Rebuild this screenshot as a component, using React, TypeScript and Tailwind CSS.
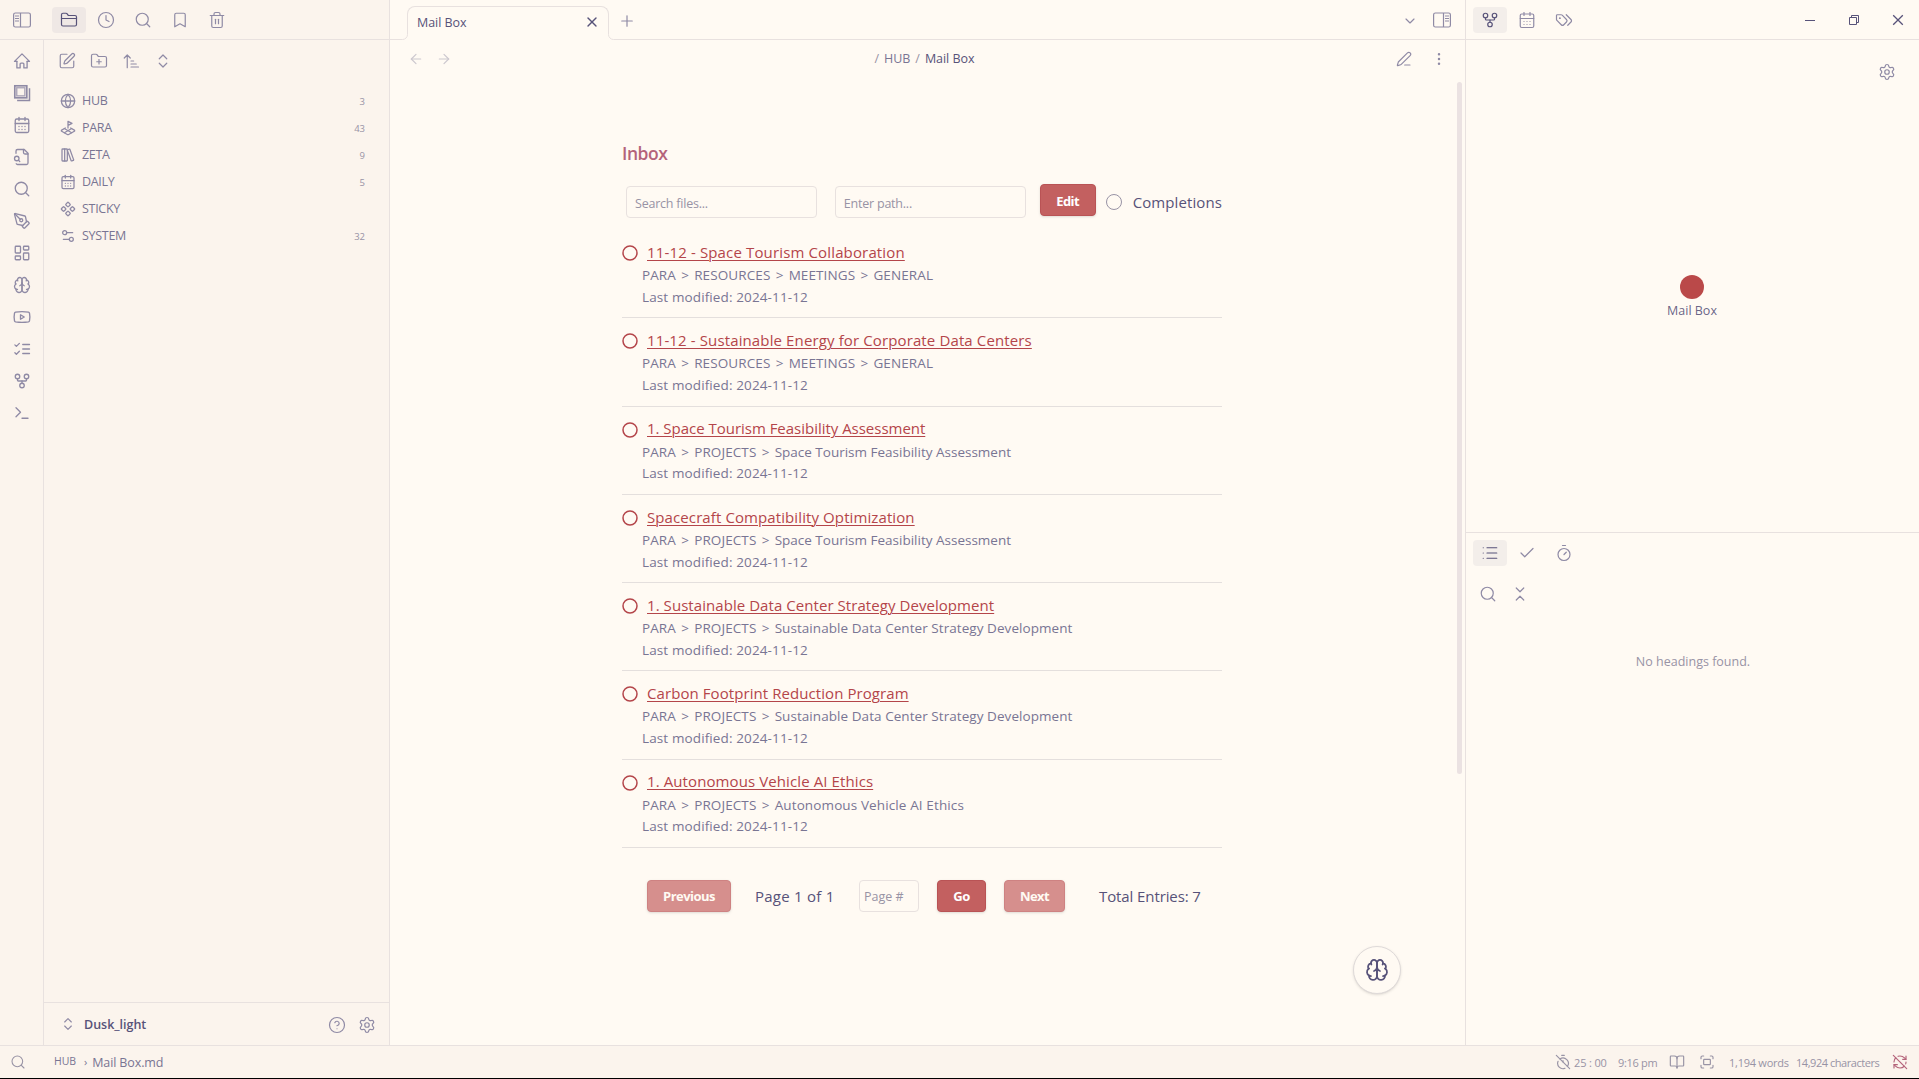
import React from "react";
import {
  ArrowLeft,
  ArrowRight,
  Bookmark,
  BookOpen,
  CalendarDays,
  Check,
  ChevronDown,
  ChevronsDownUp,
  ChevronsUpDown,
  CircleHelp,
  Clock,
  Component,
  EllipsisVertical,
  FolderClosed,
  FolderPlus,
  GitFork,
  Globe,
  LandPlot,
  LayoutDashboard,
  LibraryBig,
  List,
  PenTool,
  Plus,
  RefreshCwOff,
  Search,
  Settings,
  Settings2,
  SquarePen,
  Terminal,
  Timer,
  TimerOff,
  Trash2,
  X,
} from "lucide-react";

type IconProps = { size?: number; strokeWidth?: number; className?: string };
type IconType = React.ComponentType<any>;

function icon(children: React.ReactNode) {
  return function Icon({ size = 18, strokeWidth = 1.75, className = "" }: IconProps) {
    return (
      <svg
        width={size}
        height={size}
        viewBox="0 0 24 24"
        fill="none"
        stroke="currentColor"
        strokeWidth={strokeWidth}
        strokeLinecap="round"
        strokeLinejoin="round"
        className={className}
      >
        {children}
      </svg>
    );
  };
}

const HomeIcon = icon(
  <>
    <path d="M5.2 12.5H2L12 2.5l10 10h-3.200" />
    <path d="M5.2 12.500v8.700h4.300V16a1.200 1.200 0 0 1 1.200-1.200h2.600A1.200 1.200 0 0 1 14.500 16v5.200h4.300v-8.700" />
  </>,
);
const FramesIcon = icon(
  <>
    <rect x="2.4" y="2.4" width="16" height="16" strokeWidth="2.2" strokeLinejoin="miter" />
    <rect x="5" y="5" width="10.8" height="10.8" strokeWidth="1.8" strokeLinejoin="miter" opacity="0.75" />
    <path d="M22 5.5V22H5.500" strokeWidth="2" strokeLinecap="butt" strokeLinejoin="miter" />
  </>,
);
const FileSearchIcon = icon(
  <>
    <path d="M14 2v4a2 2 0 0 0 2 2h4" />
    <path d="M4.268 21a2 2 0 0 0 1.727 1H18a2 2 0 0 0 2-2V7l-5-5H6a2 2 0 0 0-2 2v3" />
    <path d="m9 18-1.5-1.5" />
    <circle cx="5" cy="14" r="3" />
  </>,
);
const BrainIcon = icon(
  <>
    <path d="M12 5a3 3 0 1 0-5.997.125 4 4 0 0 0-2.526 5.77 4 4 0 0 0 .556 6.588A4 4 0 1 0 12 18Z" />
    <path d="M12 5a3 3 0 1 1 5.997.125 4 4 0 0 1 2.526 5.77 4 4 0 0 1-.556 6.588A4 4 0 1 1 12 18Z" />
    <path d="M15 13a4.5 4.5 0 0 1-3-4 4.5 4.5 0 0 1-3 4" />
    <path d="M17.599 6.5a3 3 0 0 0 .399-1.375" />
    <path d="M6.003 5.125A3 3 0 0 0 6.401 6.5" />
    <path d="M3.477 10.896a4 4 0 0 1 .585-.396" />
    <path d="M19.938 10.5a4 4 0 0 1 .585.396" />
    <path d="M6 18a4 4 0 0 1-1.967-.516" />
    <path d="M19.967 17.484A4 4 0 0 1 18 18" />
  </>,
);
const VideoIcon = icon(
  <>
    <path d="M2 17a24.12 24.12 0 0 1 0-10 2 2 0 0 1 1.4-1.4 56 56 0 0 1 17.2 0A2 2 0 0 1 22 7a24.12 24.12 0 0 1 0 10 2 2 0 0 1-1.4 1.4 56 56 0 0 1-17.2 0A2 2 0 0 1 2 17" />
    <path d="m10 15 5-3-5-3z" />
  </>,
);
const ChecksIcon = icon(
  <path d="m2.500 6.500 2 2 4-4M2.500 17l2 2 4-4M13 6h9M13 12h9M13 18h9" />,
);
const SortIcon = icon(<path d="m3 8 4-4 4 4M7 4v17M12 12h3.500M12 16h7M12 20h10" />);
const PencilIcon = icon(
  <path d="M13 21h8M21.174 6.812a1 1 0 0 0-3.986-3.987L3.842 16.174a2 2 0 0 0-.5.83l-1.321 4.352a.5.5 0 0 0 .623.622l4.353-1.32a2 2 0 0 0 .83-.497z" />,
);
const TagsIcon = icon(
  <>
    <path d="m15 5 6.3 6.3a2.4 2.4 0 0 1 0 3.4L17 19" />
    <path d="M9.586 5.586A2 2 0 0 0 8.172 5H3a1 1 0 0 0-1 1v5.172a2 2 0 0 0 .586 1.414L8.29 18.29a2.426 2.426 0 0 0 3.42 0l3.58-3.58a2.426 2.426 0 0 0 0-3.42z" />
    <circle cx="6.5" cy="9.5" r=".5" fill="currentColor" />
  </>,
);
const FocusIcon = icon(
  <>
    <path d="M3 7V5a2 2 0 0 1 2-2h2M17 3h2a2 2 0 0 1 2 2v2M21 17v2a2 2 0 0 1-2 2h-2M7 21H5a2 2 0 0 1-2-2v-2" />
    <rect width="10" height="8" x="7" y="8" rx="1" />
  </>,
);

function PanelToggle({ flip = false }: { flip?: boolean }) {
  return (
    <svg
      width="20"
      height="18"
      viewBox="0 0 20 18"
      fill="none"
      stroke="currentColor"
      strokeWidth="1.2"
      className={flip ? "-scale-x-100" : ""}
    >
      <rect x="1.6" y="2" width="16.8" height="14" rx="1.8" />
      <path d="M8.500 2v14M3 5h4M3 7.500h4M3 10h4" />
    </svg>
  );
}

/* Curved foot that joins a tab's side border to the line under the tab bar. */
function TabFoot({ className }: { className: string }) {
  return (
    <svg width="6" height="6" viewBox="0 0 6 6" fill="none" className={`absolute bottom-0 ${className}`}>
      <rect width="6" height="6" fill="#fffaf3" />
      <path d="M0 5.500h.5a5 5 0 0 0 5-5V0" stroke="#e8e1df" />
    </svg>
  );
}

function TabIcon({ Icon, active = false }: { Icon: IconType; active?: boolean }) {
  return (
    <div
      className={`flex h-[26px] w-[34px] items-center justify-center rounded ${
        active ? "bg-[#575279]/[0.07] text-[#575279]" : ""
      }`}
    >
      <Icon size={18} strokeWidth={1.6} />
    </div>
  );
}

const ribbon: IconType[] = [
  HomeIcon, FramesIcon, CalendarDays, FileSearchIcon, Search, PenTool,
  LayoutDashboard, BrainIcon, VideoIcon, ChecksIcon, GitFork, Terminal,
];

const folders: { name: string; count: string; Icon: IconType }[] = [
  { name: "HUB", count: "3", Icon: Globe },
  { name: "PARA", count: "43", Icon: LandPlot },
  { name: "ZETA", count: "9", Icon: LibraryBig },
  { name: "DAILY", count: "5", Icon: CalendarDays },
  { name: "STICKY", count: "", Icon: Component },
  { name: "SYSTEM", count: "32", Icon: Settings2 },
];

const entries = [
  {
    title: "11-12 - Space Tourism Collaboration",
    tracking: "tracking-[0.145px]",
    path: ["PARA", "RESOURCES", "MEETINGS", "GENERAL"],
    pathTracking: "tracking-[0.12px]",
  },
  {
    title: "11-12 - Sustainable Energy for Corporate Data Centers",
    tracking: "tracking-[0.125px]",
    path: ["PARA", "RESOURCES", "MEETINGS", "GENERAL"],
    pathTracking: "tracking-[0.12px]",
  },
  {
    title: "1. Space Tourism Feasibility Assessment",
    tracking: "tracking-[-0.02px]",
    path: ["PARA", "PROJECTS", "Space Tourism Feasibility Assessment"],
    pathTracking: "tracking-normal",
  },
  {
    title: "Spacecraft Compatibility Optimization",
    tracking: "tracking-[0.1px]",
    path: ["PARA", "PROJECTS", "Space Tourism Feasibility Assessment"],
    pathTracking: "tracking-normal",
  },
  {
    title: "1. Sustainable Data Center Strategy Development",
    tracking: "tracking-[0.06px]",
    path: ["PARA", "PROJECTS", "Sustainable Data Center Strategy Development"],
    pathTracking: "tracking-[0.06px]",
  },
  {
    title: "Carbon Footprint Reduction Program",
    tracking: "tracking-[0.075px]",
    path: ["PARA", "PROJECTS", "Sustainable Data Center Strategy Development"],
    pathTracking: "tracking-[0.06px]",
  },
  {
    title: "1. Autonomous Vehicle AI Ethics",
    tracking: "tracking-[0.1px]",
    path: ["PARA", "PROJECTS", "Autonomous Vehicle AI Ethics"],
    pathTracking: "tracking-[0.12px]",
  },
];

function EntryPath({ parts, tracking }: { parts: string[]; tracking: string }) {
  return (
    <div className="whitespace-pre">
      {parts.map((part, i) => (
        <React.Fragment key={part}>
          {i > 0 && <span className="[word-spacing:1.75px]">{" > "}</span>}
          <span className={i === parts.length - 1 ? tracking : "tracking-[0.1px]"}>{part}</span>
        </React.Fragment>
      ))}
    </div>
  );
}

function LeftSide() {
  return (
    <div className="flex w-[390px] shrink-0 flex-col border-r border-[#e8e1df] bg-[#fbf4ed]">
      <div className="flex h-10 shrink-0 items-center border-b border-[#e8e1df] pl-3">
        <PanelToggle />
        <div className="ml-5 flex gap-[3px]">
          <TabIcon Icon={FolderClosed} active />
          <TabIcon Icon={Clock} />
          <TabIcon Icon={Search} />
          <TabIcon Icon={Bookmark} />
          <TabIcon Icon={Trash2} />
        </div>
      </div>
      <div className="flex min-h-0 flex-1">
        <div className="flex w-11 shrink-0 flex-col items-center gap-[14px] border-r border-[#e8e1df] pt-3">
          {ribbon.map((Icon, i) => (
            <Icon key={i} size={18} strokeWidth={1.75} />
          ))}
        </div>
        <div className="flex flex-1 flex-col">
          <div className="flex gap-[14px] pt-3 pl-[14px]">
            <SquarePen size={18} strokeWidth={1.6} />
            <FolderPlus size={18} strokeWidth={1.6} />
            <SortIcon strokeWidth={1.6} />
            <ChevronsUpDown size={18} strokeWidth={1.6} />
          </div>
          <div className="mt-[17px] flex flex-1 flex-col">
            {folders.map(({ name, count, Icon }) => (
              <div key={name} className="flex h-[27px] items-center pr-6 pl-4">
                <Icon size={16} strokeWidth={1.9} />
                <span className="mt-[2px] ml-[6px] text-[12.5px] tracking-[-0.3px] text-[#797593]">{name}</span>
                <span className="mt-[3px] ml-auto text-[9.5px] text-[#9893a5]">{count}</span>
              </div>
            ))}
          </div>
          <div className="flex h-[43px] items-center border-t border-[#e8e1df] pr-[13px] pl-4">
            <ChevronsUpDown size={16} strokeWidth={1.75} />
            <span className="mt-0.5 ml-2 text-[12.5px] font-semibold tracking-[-0.02px] text-[#575279]">Dusk_light</span>
            <CircleHelp size={18} strokeWidth={1.6} className="mt-px ml-auto" />
            <Settings size={18} strokeWidth={1.6} className="mt-px ml-3" />
          </div>
        </div>
      </div>
    </div>
  );
}

function Button({ label, width, pad = "pt-0.5", faded = false }: { label: string; width: string; pad?: string; faded?: boolean }) {
  return (
    <div
      className={`flex h-8 items-center justify-center rounded border text-[13px] font-bold tracking-[-0.55px] shadow-sm ${pad} ${width} ${
        faded
          ? "border-[#ce8282] bg-[#d68f8d] text-[#fffaf3]"
          : "border-[#b95355] bg-[#c36060] text-white"
      }`}
    >
      {label}
    </div>
  );
}

function Inbox() {
  return (
    <div className="flex w-[600px] flex-col">
      <div className="h-7 text-[17.5px] leading-[26px] font-semibold tracking-[-0.45px] text-[#b4637a]">Inbox</div>
      <div className="mt-4 flex h-[34px] pl-1">
        <div className="mt-0.5 flex h-8 w-[191px] items-center rounded border border-[#e8e1df] pt-1 pl-2 text-[12.5px] tracking-[-0.22px] text-[#9893a5]">
          Search files...
        </div>
        <div className="mt-0.5 ml-[18px] flex h-8 w-[191px] items-center rounded border border-[#e8e1df] pt-1 pl-2 text-[12.5px] tracking-[-0.22px] text-[#9893a5]">
          Enter path...
        </div>
        <div className="ml-[14px]">
          <Button label="Edit" width="w-[56px]" pad="pt-[3px]" />
        </div>
        <div className="mt-2.5 ml-2.5 size-4 rounded-full border border-[#9893a5]" />
        <span className="mt-1 ml-[11px] flex-1 text-[15px] leading-7 tracking-[0.1px] whitespace-nowrap text-[#575279]">
          Completions
        </span>
      </div>
      <div className="mt-3 flex flex-col">
        {entries.map((e) => (
          <div key={e.title} className="flex h-[88.28px] flex-col border-b border-[#e4dfdd] pt-[10px]">
            <div className="flex h-6 items-center">
              <svg width="16" height="16" viewBox="0 0 16 16" className="mt-0.5 text-[#b4454a]">
                <circle cx="8" cy="8" r="7" fill="none" stroke="currentColor" strokeWidth="1.5" />
              </svg>
              <span
                className={`ml-[9px] text-[15px] text-[#b4454a] underline decoration-1 underline-offset-2 ${e.tracking}`}
              >
                {e.title}
              </span>
            </div>
            <div className="pt-px pl-5 text-[13.5px] leading-[21.7px] text-[#797593]">
              <EntryPath parts={e.path} tracking={e.pathTracking} />
              <div className="tracking-[0.12px]">Last modified: 2024-11-12</div>
            </div>
          </div>
        ))}
      </div>
      <div className="mt-8 flex h-8 items-center pl-[25px] text-[15px] whitespace-nowrap text-[#575279]">
        <Button label="Previous" width="w-[84px]" faded />
        <span className="ml-[24px] w-[79px] tracking-[0.25px]">Page 1 of 1</span>
        <div className="ml-[25px] flex h-8 w-[60px] items-center rounded border border-[#e8e1df] pt-[3px] pl-1 text-[12.5px] text-[#9893a5]">
          Page #
        </div>
        <div className="ml-[18px]">
          <Button label="Go" width="w-[49px]" />
        </div>
        <div className="ml-[18px]">
          <Button label="Next" width="w-[61px]" faded />
        </div>
        <span className="ml-[34px] tracking-[-0.1px]">Total Entries: 7</span>
      </div>
    </div>
  );
}

function Center() {
  return (
    <div className="relative flex flex-1 flex-col">
      <div className="flex h-10 shrink-0">
        <div className="w-[17px] border-b border-[#e8e1df]" />
        <div className="relative flex w-[202px] items-start pt-[6px]">
          <div className="flex h-[34px] w-full items-center rounded-t-lg border border-b-0 border-[#e8e1df] pr-[8px] pl-[9px] text-[12.5px] tracking-[-0.05px] text-[#575279]">
            <span className="-mt-px">Mail Box</span>
            <X size={16} strokeWidth={2} className="-mt-[3px] ml-auto" />
          </div>
          <TabFoot className="-left-[5px]" />
          <TabFoot className="-right-[5px] -scale-x-100" />
        </div>
        <div className="flex flex-1 items-center border-b border-[#e8e1df] pr-[13px] pl-[9px]">
          <Plus size={18} strokeWidth={1.6} className="mt-0.5" />
          <ChevronDown size={16} strokeWidth={1.75} className="mt-0.5 ml-auto" />
          <div className="ml-[14px]">
            <PanelToggle flip />
          </div>
        </div>
      </div>
      <div className="grid h-[38px] shrink-0 grid-cols-3 items-center pr-[18px] pl-[18px]">
        <div className="flex gap-3 text-[#ccc7ce]">
          <ArrowLeft size={16} strokeWidth={1.75} />
          <ArrowRight size={16} strokeWidth={1.75} />
        </div>
        <div className="flex justify-center gap-[5px] pr-[6px] text-[12.5px] tracking-[-0.04px] text-[#9893a5]">
          <span>/</span>
          <span className="text-[#797593]">HUB</span>
          <span>/</span>
          <span className="text-[#575279]">Mail Box</span>
        </div>
        <div className="flex justify-end gap-[19px]">
          <PencilIcon size={16} />
          <EllipsisVertical size={16} strokeWidth={1.75} />
        </div>
      </div>
      <div className="flex flex-1">
        <div className="flex flex-1 justify-center pt-[62px] pr-[3px]">
          <Inbox />
        </div>
        <div className="mt-1 mr-[3px] h-[692px] w-[5px] rounded-full bg-[#ebe2e2]" />
      </div>
      <div className="absolute right-[64px] bottom-[51px] flex size-12 items-center justify-center rounded-full border border-[#dfdad9] bg-[#fffaf3] text-[#575279] shadow-sm shadow-black/10">
        <BrainIcon size={24} strokeWidth={1.75} />
      </div>
    </div>
  );
}

function RightSide() {
  return (
    <div className="flex w-[454px] shrink-0 flex-col border-l border-[#e8e1df]">
      <div className="flex h-10 shrink-0 items-center gap-[3px] border-b border-[#e8e1df] pr-3 pl-[7px]">
        <TabIcon Icon={GitFork} active />
        <TabIcon Icon={CalendarDays} />
        <TabIcon Icon={TagsIcon} />
        <div className="ml-auto flex items-center gap-[26px] text-[#575279]">
          <svg width="18" height="18" viewBox="0 0 18 18" fill="none" stroke="currentColor">
            <path d="M4 9.500h10" />
          </svg>
          <svg width="18" height="18" viewBox="0 0 18 18" fill="none" stroke="currentColor">
            <path d="M4.500 6.500h7v7h-7zM6.500 6.500v-2h7v7h-2" />
          </svg>
          <svg width="18" height="18" viewBox="0 0 18 18" fill="none" stroke="currentColor" strokeWidth="1.3">
            <path d="m4.200 4.200 9.600 9.600M13.800 4.200l-9.600 9.600" />
          </svg>
        </div>
      </div>
      <div className="flex h-[492px] shrink-0 flex-col">
        <div className="flex justify-end pt-[23px] pr-[23px]">
          <Settings size={18} strokeWidth={1.6} />
        </div>
        <div className="mt-[194px] flex flex-col items-center pr-[1px]">
          <div className="size-6 rounded-full bg-[#ba4949]" />
          <span className="mt-[3px] text-[12.5px] text-[#575279]/90">Mail Box</span>
        </div>
      </div>
      <div className="flex flex-1 flex-col border-t border-[#e8e1df]">
        <div className="flex gap-[3px] pt-[7px] pl-[7px]">
          <TabIcon Icon={List} active />
          <TabIcon Icon={Check} />
          <TabIcon Icon={Timer} />
        </div>
        <div className="flex gap-[14px] pt-[19px] pl-[13px]">
          <Search size={18} strokeWidth={1.6} />
          <ChevronsDownUp size={18} strokeWidth={1.6} />
        </div>
        <div className="mt-[50px] pl-px text-center text-[12.5px] text-[#9893a5]">No headings found.</div>
      </div>
    </div>
  );
}

function StatusBar() {
  return (
    <div className="flex h-[33px] shrink-0 items-center border-t border-[#e8e1df] bg-[#fbf4ed] pr-[11px] pl-[10px] text-[11px] whitespace-nowrap text-[#9893a5]">
      <Search size={16} strokeWidth={1.6} />
      <span className="ml-7 text-[10.5px] tracking-[-0.1px] text-[#797593]">HUB</span>
      <span className="ml-2 text-[11px] text-[#797593]">›</span>
      <span className="mt-0.5 ml-[5px] text-[12.5px] tracking-[-0.12px] text-[#797593]">Mail Box.md</span>
      <TimerOff size={16} strokeWidth={1.75} className="ml-auto" />
      <span className="mt-0.5 ml-[3px] w-8 tracking-[-0.15px]">25 : 00</span>
      <span className="mt-0.5 ml-3 w-[38px] tracking-[-0.3px]">9:16 pm</span>
      <BookOpen size={16} strokeWidth={1.75} className="ml-[13px]" />
      <FocusIcon size={16} className="ml-[14px]" />
      <span className="mt-0.5 ml-[14px] w-[59px] tracking-[-0.25px]">1,194 words</span>
      <span className="mt-0.5 ml-[8px] w-[84px] tracking-[-0.45px]">14,924 characters</span>
      <RefreshCwOff size={16} strokeWidth={1.75} className="ml-3 text-[#b4637a]" />
    </div>
  );
}

export default function App() {
  return (
    <div className="flex h-[1079px] w-[1919px] flex-col overflow-hidden border-b border-black bg-[#fffaf3] font-['Open_Sans','Noto_Sans',sans-serif] text-[#8f8aa5]">
      <div className="flex min-h-0 flex-1">
        <LeftSide />
        <Center />
        <RightSide />
      </div>
      <StatusBar />
    </div>
  );
}
